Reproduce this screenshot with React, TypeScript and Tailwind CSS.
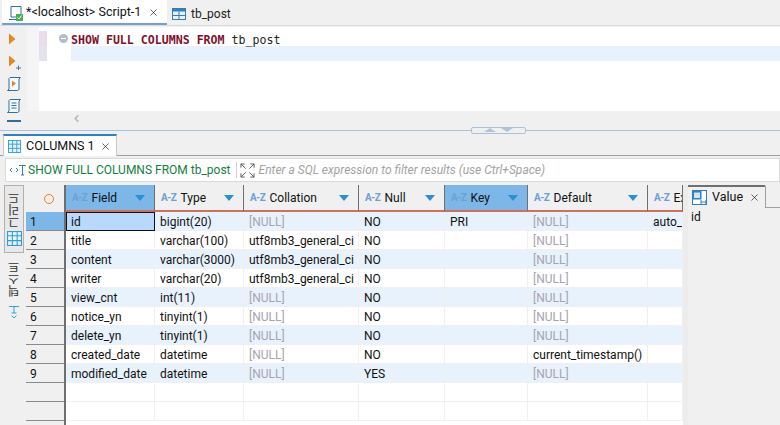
import { ChevronLeft, X } from 'lucide-react'

const COLUMNS = [
  { name: 'Field', width: 'w-[89px]', selected: true },
  { name: 'Type', width: 'w-[89px]' },
  { name: 'Collation', width: 'w-[115px]' },
  { name: 'Null', width: 'w-[86px]' },
  { name: 'Key', width: 'w-[83px]', selected: true },
  { name: 'Default', width: 'w-[120px]' },
  { name: 'Ex', width: 'w-[35px]', cut: true },
]

const NUL = '[NULL]'
const UTF = 'utf8mb3_general_ci'

const ROWS = [
  ['id', 'bigint(20)', NUL, 'NO', 'PRI', NUL, 'auto_'],
  ['title', 'varchar(100)', UTF, 'NO', '', NUL, ''],
  ['content', 'varchar(3000)', UTF, 'NO', '', NUL, ''],
  ['writer', 'varchar(20)', UTF, 'NO', '', NUL, ''],
  ['view_cnt', 'int(11)', NUL, 'NO', '', NUL, ''],
  ['notice_yn', 'tinyint(1)', NUL, 'NO', '', NUL, ''],
  ['delete_yn', 'tinyint(1)', NUL, 'NO', '', NUL, ''],
  ['created_date', 'datetime', NUL, 'NO', '', 'current_timestamp()', ''],
  ['modified_date', 'datetime', NUL, 'YES', '', NUL, ''],
  ['', '', '', '', '', '', ''],
  ['', '', '', '', '', '', ''],
]

function TableIcon({ className }: { className?: string }) {
  return (
    <svg viewBox="0 0 14 14" className={className} fill="none">
      <rect x="0.5" y="1.5" width="13" height="11" stroke="#2f7fc1" />
      <rect x="0.5" y="1.5" width="13" height="3" fill="#2f7fc1" />
      <path d="M0.5 8.5H13.5M7 4.5V12.5" stroke="#2f7fc1" />
    </svg>
  )
}

function GridIcon({ className }: { className?: string }) {
  return (
    <svg viewBox="0 0 14 14" className={className} fill="none">
      <rect x="0.5" y="0.5" width="13" height="13" stroke="#2f9fd8" fill="#e8f4fb" />
      <path d="M0.5 4.5H13.5M0.5 9H13.5M5 0.5V13.5M9.5 0.5V13.5" stroke="#2f9fd8" />
    </svg>
  )
}

function RunIcon({ plus }: { plus?: boolean }) {
  return (
    <svg viewBox="0 0 16 16" className="w-4 h-4 shrink-0">
      <path d="M3 1.5 L9.5 7 L3 12.5 Z" fill="#e8871e" />
      {plus && <path d="M10 14H15M12.5 11.5V16" stroke="#2f7fc1" fill="none" />}
    </svg>
  )
}

function ScriptIcon({ lines }: { lines?: boolean }) {
  return (
    <svg viewBox="0 0 16 16" className="w-4 h-4 shrink-0" fill="none">
      <path d="M4 1.5H14.5L13 3V13.5L11.5 14.5H1.5L3 13V2.5Z" stroke="#2f6f9f" fill="#f7fafc" />
      {lines ? (
        <path d="M5.5 5H10.5M5.5 7.5H10.5M5.5 10H10.5" stroke="#2f6f9f" />
      ) : (
        <path d="M6 4.5L10 7.5L6 10.5Z" fill="#e8871e" />
      )}
    </svg>
  )
}

function SortBadge() {
  return <span className="text-[10px] font-bold text-[#6f9fd4] tracking-[-0.4px] mr-[4px] shrink-0">A-Z</span>
}

function HeaderCell({ name, width, selected, cut }: { name: string; width: string; selected?: boolean; cut?: boolean }) {
  return (
    <div
      className={`${width} shrink-0 h-[27px] flex items-center pl-[6px] pr-[9px] overflow-hidden border-r border-r-[#6f6f6f] border-b-2 border-b-[#d0705c] ${
        selected ? 'bg-[#7cb7e8]' : 'bg-[#f0f0f0]'
      }`}
    >
      <SortBadge />
      <span className="text-[#111] whitespace-nowrap">{name}</span>
      {!cut && <span className="ml-auto w-0 h-0 border-l-[5px] border-r-[5px] border-t-[6px] border-l-transparent border-r-transparent border-t-[#2b8fd0]" />}
    </div>
  )
}

function VerticalLabel({ text }: { text: string }) {
  return (
    <span className="[writing-mode:vertical-rl] rotate-180 text-[12px] leading-none text-[#333] font-['Noto_Sans_CJK_KR',sans-serif]">
      {text}
    </span>
  )
}

export default function App() {
  return (
    <div className="w-[780px] h-[425px] overflow-hidden bg-[#f0f0f0] flex flex-col text-[12px] text-[#111] font-['Roboto','Noto_Sans',sans-serif]">
      {/* editor tabs */}
      <div className="h-[26px] shrink-0 flex items-stretch pl-[2px] border-b border-[#dcdcdc]">
        <div className="w-[165px] bg-white border-b-2 border-[#6f9fd8] flex items-center pl-[6px] pt-[2px] gap-[2px]">
          <svg viewBox="0 0 16 16" className="w-4 h-4 shrink-0" fill="none">
            <path d="M3 1.5H13V12H3Z M1 14.5H12" stroke="#2f6f9f" />
            <rect x="8" y="9" width="7" height="7" fill="#4caf50" />
            <path d="M9.5 12.5L11 14L13.5 10.5" stroke="#fff" />
          </svg>
          <span className="whitespace-nowrap text-[12.5px]">*&lt;localhost&gt; Script-1</span>
          <X className="w-[11px] h-[11px] ml-auto mr-[8px]" strokeWidth={1.4} />
        </div>
        <div className="flex items-center pl-[5px] pt-[2px] gap-[5px] text-[#222]">
          <TableIcon className="w-[14px] h-[14px]" />
          <span className="text-[12px]">tb_post</span>
        </div>
      </div>

      {/* sql editor */}
      <div className="h-[99px] shrink-0 flex mt-[1px] overflow-hidden">
        <div className="w-[27px] shrink-0 flex flex-col items-center gap-[6px] pt-[5px]">
          <RunIcon />
          <RunIcon plus />
          <ScriptIcon />
          <ScriptIcon lines />
          <div className="w-[14px] h-4 shrink-0 border-t-2 border-[#2f6f9f]" />
        </div>
        <div className="flex-1 flex flex-col min-w-0">
          <div className="flex-1 flex">
            <div className="w-[12px] bg-[#f5f5f5]" />
            <div className="w-[8px] flex flex-col pt-[4px] bg-white">
              <div className="h-[15px] bg-[#eadcec]" />
              <div className="h-[15px] bg-[#e4e2ee]" />
            </div>
            <div className="w-[24px] bg-white flex justify-end pr-[3px] pt-[7px]">
              <span className="w-[9px] h-[9px] rounded-full bg-[#b4bcc8] flex items-center justify-center">
                <span className="w-[5px] h-[1px] bg-[#fff]" />
              </span>
            </div>
            <div className="flex-1 bg-white flex flex-col pt-[4px]">
              <div className="relative z-10 h-[15px] leading-[19px] font-['DejaVu_Sans_Mono',monospace] text-[11.6px] whitespace-pre text-[#222]">
                <span className="font-bold text-[#7f0f2f]">SHOW FULL COLUMNS FROM </span>tb_post
              </div>
              <div className="h-[15px] bg-[#e8f2fe]" />
            </div>
          </div>
          <div className="h-[15px] flex items-center shrink-0 bg-[#f0f0f0] pl-[44px]">
            <ChevronLeft className="w-[11px] h-[11px] text-[#b5b5b5]" strokeWidth={3.5} />
          </div>
        </div>
      </div>

      {/* sash */}
      <div className="h-[8px] shrink-0 flex items-center relative">
        <div className="w-[471px] h-[1px] bg-[#a9c2dc]" />
        <div className="w-[55px] h-[7px] border border-[#a9c2dc] rounded-[2px] flex items-center justify-center gap-[5px]">
          <span className="w-0 h-0 border-l-[6px] border-r-[6px] border-b-[4px] border-l-transparent border-r-transparent border-b-[#b4c3d2]" />
          <span className="w-0 h-0 border-l-[6px] border-r-[6px] border-t-[4px] border-l-transparent border-r-transparent border-t-[#b4c3d2]" />
        </div>
        <div className="flex-1 h-[1px] bg-[#a9c2dc]" />
      </div>

      {/* results tab strip */}
      <div className="h-[22px] shrink-0 flex items-end pl-[3px] border-b border-[#a0a0a0]">
        <div className="w-[114px] h-[22px] bg-white border-t-2 border-x border-t-[#2f7fc1] border-x-[#c8c8c8] flex items-center pl-[4px] gap-[5px] -mb-[1px]">
          <GridIcon className="w-[13px] h-[13px]" />
          <span className="whitespace-nowrap text-[12.5px]">COLUMNS 1</span>
          <X className="w-[11px] h-[11px]" strokeWidth={1.4} />
        </div>
      </div>

      {/* filter bar */}
      <div className="h-[26px] shrink-0 flex items-start pt-[2px]">
        <div className="flex-1 ml-[5px] h-[24px] bg-white border border-[#dadada] flex items-center pl-[3px] overflow-hidden">
          <svg viewBox="0 0 18 12" className="w-[18px] h-[12px] shrink-0" fill="none">
            <path d="M1 6L3 4M1 6L3 8M7 4L9 6L7 8" stroke="#2f7fc1" />
            <path d="M10 1.5H17M13.5 1.5V11M12 11H15" stroke="#2f7fc1" />
          </svg>
          <span className="ml-[1px] text-[#0f7f3f] whitespace-nowrap">SHOW FULL COLUMNS FROM tb_post</span>
          <div className="w-[1px] h-[16px] bg-[#d0d0d0] ml-[5px]" />
          <svg viewBox="0 0 16 16" className="w-[15px] h-[15px] ml-[3px] shrink-0 text-[#555]" fill="none" stroke="currentColor">
            <path d="M1 5V1H5M1 1L6 6M11 1H15V5M15 1L10 6M1 11V15H5M1 15L6 10M15 11V15H11M15 15L10 10" />
          </svg>
          <span className="ml-[4px] italic text-[#a3a3a3] whitespace-nowrap">Enter a SQL expression to filter results (use Ctrl+Space)</span>
        </div>
      </div>

      {/* result area */}
      <div className="flex-1 min-h-0 flex mt-[3px]">
        <div className="w-[26px] shrink-0 flex flex-col">
          <div className="ml-[4px] w-[20px] h-[68px] border border-[#b0b0b0] bg-[#e8e8e8] flex flex-col items-center pt-[6px] gap-[3px]">
            <VerticalLabel text="그리드" />
            <GridIcon className="w-[15px] h-[15px]" />
          </div>
          <div className="ml-[4px] w-[20px] flex flex-col items-center pt-[8px] gap-[8px]">
            <VerticalLabel text="텍스트" />
            <svg viewBox="0 0 12 14" className="w-[12px] h-[14px]" fill="none">
              <path d="M1 1.5H11M6 1.5V8M3.5 8H8.5M3.5 10.5L6 13L8.5 10.5" stroke="#29a3d8" />
            </svg>
          </div>
        </div>

        <div className="w-[40px] shrink-0 border-r-2 border-[#6f6f6f]">
          <div className="h-[27px] flex items-center justify-center pl-[8px]">
            <span className="w-[10px] h-[10px] rounded-full border-[1.5px] border-[#e8871e]" />
          </div>
          {ROWS.map((_, i) => (
            <div
              key={i}
              className={`h-[19px] pl-[4px] leading-[21px] border-b border-[#8a8a8a] ${i === 0 ? 'bg-[#7cb7e8]' : ''}`}
            >
              {i < 9 ? i + 1 : ''}
            </div>
          ))}
        </div>

        <div className="w-[617px] shrink-0 overflow-hidden bg-white">
          <div className="flex">
            {COLUMNS.map(c => (
              <HeaderCell key={c.name} {...c} />
            ))}
          </div>
          {ROWS.map((row, i) => (
            <div key={i} className={`flex h-[19px] ${i % 2 === 0 && i < 9 ? 'bg-[#e8f2fc]' : ''}`}>
              {row.map((v, j) => {
                const current = i === 0 && j === 0
                return (
                  <div
                    key={j}
                    className={`${COLUMNS[j].width} shrink-0 whitespace-nowrap overflow-hidden ${
                      current
                        ? 'pl-[4px] leading-[19px] bg-[#b8d9fb] border border-[#111]'
                        : 'pl-[5px] leading-[21px] border-r border-b border-[#f0f0f0]'
                    } ${v === NUL ? 'text-[#a7a3b0]' : ''}`}
                  >
                    {v}
                  </div>
                )
              })}
            </div>
          ))}
        </div>

        {/* value panel */}
        <div className="flex-1 flex flex-col border-l-[5px] border-[#ececec]">
          <div className="h-[23px] flex items-stretch">
            <div className="w-[78px] border-t-2 border-t-[#6f6f6f] border-r border-r-[#a0a0a0] flex items-center pl-[4px] gap-[5px] rounded-tr-[2px]">
              <svg viewBox="0 0 15 15" className="w-[15px] h-[15px] shrink-0" fill="none">
                <rect x="0.5" y="0.5" width="14" height="14" stroke="#2f7fc1" fill="#fff" />
                <rect x="0.5" y="0.5" width="9" height="9" fill="#2f7fc1" />
                <path d="M2 2.5H8V8H2Z" fill="#cfe5f7" />
                <path d="M9 12H14M9 10V14M14 10V14" stroke="#2f7fc1" />
              </svg>
              <span className="text-[12.5px]">Value</span>
              <X className="w-[11px] h-[11px] ml-[1px]" strokeWidth={1.4} />
            </div>
            <div className="flex-1 border-b border-[#a0a0a0]" />
          </div>
          <div className="pl-[3px] leading-[18px]">id</div>
        </div>
      </div>
    </div>
  )
}
